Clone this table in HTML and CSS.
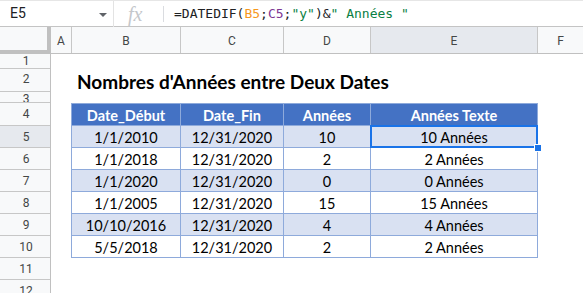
FILE: index.html
```html
<!DOCTYPE html>
<html lang="fr">
<head>
<meta charset="utf-8">
<title>Nombres d'Années entre Deux Dates</title>
<link rel="stylesheet" href="styles.css">
</head>
<body>
<div class="app">
  <div class="formula-bar">
    <div class="name-box">E5</div>
    <div class="caret"></div>
    <div class="fx-sep"></div>
    <div class="fx">fx</div>
    <div class="fx-sep2"></div>
    <div class="formula"><span>=DATEDIF(</span><span class="ref-b">B5</span><span>;</span><span class="ref-c">C5</span><span>;</span><span class="str">"y"</span><span>)&amp;</span><span class="str">" Années "</span></div>
  </div>
  <div class="col-headers">
    <div class="corner"></div>
    <div class="ch col-a">A</div>
    <div class="ch col-b">B</div>
    <div class="ch col-c">C</div>
    <div class="ch col-d">D</div>
    <div class="ch col-e active">E</div>
    <div class="ch col-f">F</div>
  </div>
  <div class="body">
    <div class="row-headers">
      <div class="rh r1">1</div>
      <div class="rh r2">2</div>
      <div class="rh r3">3</div>
      <div class="rh r4">4</div>
      <div class="rh">5</div>
      <div class="rh">6</div>
      <div class="rh">7</div>
      <div class="rh">8</div>
      <div class="rh">9</div>
      <div class="rh">10</div>
      <div class="rh">11</div>
      <div class="rh">12</div>
    </div>
    <div class="cells">
      <div class="spacer-1"></div>
      <div class="title">Nombres d'Années entre Deux Dates</div>
      <div class="spacer-3"></div>
      <div class="table">
        <div class="tr head">
          <div class="td col-b">Date_Début</div>
          <div class="td col-c">Date_Fin</div>
          <div class="td col-d">Années</div>
          <div class="td col-e">Années Texte</div>
        </div>
        <div class="tr band">
          <div class="td col-b">1/1/2010</div>
          <div class="td col-c">12/31/2020</div>
          <div class="td col-d">10</div>
          <div class="td col-e selected">10 Années<span class="handle"></span></div>
        </div>
        <div class="tr">
          <div class="td col-b">1/1/2018</div>
          <div class="td col-c">12/31/2020</div>
          <div class="td col-d">2</div>
          <div class="td col-e">2 Années</div>
        </div>
        <div class="tr band">
          <div class="td col-b">1/1/2020</div>
          <div class="td col-c">12/31/2020</div>
          <div class="td col-d">0</div>
          <div class="td col-e">0 Années</div>
        </div>
        <div class="tr">
          <div class="td col-b">1/1/2005</div>
          <div class="td col-c">12/31/2020</div>
          <div class="td col-d">15</div>
          <div class="td col-e">15 Années</div>
        </div>
        <div class="tr band">
          <div class="td col-b">10/10/2016</div>
          <div class="td col-c">12/31/2020</div>
          <div class="td col-d">4</div>
          <div class="td col-e">4 Années</div>
        </div>
        <div class="tr">
          <div class="td col-b">5/5/2018</div>
          <div class="td col-c">12/31/2020</div>
          <div class="td col-d">2</div>
          <div class="td col-e">2 Années</div>
        </div>
      </div>
    </div>
  </div>
</div>
</body>
</html>
```
FILE: styles.css
```css
* { box-sizing: border-box; }
html, body { margin: 0; padding: 0; background: #ffffff; }
body { width: 583px; height: 293px; overflow: hidden; font-family: Roboto, "Liberation Sans", sans-serif; }
.app { display: flex; flex-direction: column; width: 583px; }

.formula-bar {
  height: 27px;
  display: flex;
  align-items: center;
  border-top: 1px solid #e6e6e6;
  border-bottom: 1px solid #c4c4c4;
  background: #ffffff;
  position: relative;
}
.name-box {
  width: 96px;
  padding-left: 10px;
  font-size: 14px;
  color: #202124;
  line-height: 25px;
}
.caret {
  width: 0; height: 0;
  border-left: 4px solid transparent;
  border-right: 4px solid transparent;
  border-top: 4px solid #5f6368;
  margin-left: 3px;
  margin-top: 2px;
}
.fx-sep {
  width: 1px;
  height: 26px;
  background: #e3e3e3;
  margin-left: 6px;
}
.fx {
  width: 49px;
  padding-left: 14px;
  font-family: "Liberation Serif", "DejaVu Serif", serif;
  font-style: italic;
  font-size: 20px;
  color: #c4c7cb;
  line-height: 24px;
}
.fx-sep2 {
  width: 1px;
  height: 16px;
  background: #dadce0;
}
.formula {
  padding-left: 10px;
  font-family: "DejaVu Sans Mono", "Liberation Mono", monospace;
  font-size: 13px;
  color: #202124;
  white-space: pre;
  line-height: 25px;
}
.ref-b { color: #f7981d; }
.ref-c { color: #7e3794; }
.str { color: #0b8043; }

.col-headers {
  display: flex;
  height: 27px;
  background: #f8f9fa;
  border-bottom: 1px solid #c0c0c0;
}
.corner {
  width: 51px;
  background: #f8f9fa;
  border-right: 4px solid #c0c0c0;
  border-bottom: 4px solid #c0c0c0;
  height: 27px;
}
.ch {
  display: flex;
  align-items: center;
  justify-content: center;
  font-size: 12px;
  color: #444746;
  border-right: 1px solid #c7c7c7;
  padding-top: 1px;
}
.ch.active { background: #e6e9ee; color: #444746; }
.col-a { width: 21px; }
.col-b { width: 109px; }
.col-c { width: 103px; }
.col-d { width: 87px; }
.col-e { width: 167px; }
.col-f { flex: 1; border-right: none; }

.body { display: flex; }
.row-headers {
  width: 51px;
  flex: none;
  display: flex;
  flex-direction: column;
  background: #f8f9fa;
  border-right: 1px solid #c0c0c0;
}
.rh {
  height: 22px;
  flex: none;
  display: flex;
  align-items: center;
  justify-content: center;
  font-size: 12px;
  color: #444746;
  border-bottom: 1px solid #c7c7c7;
  overflow: hidden;
  padding-left: 2px;
}
.rh.r1 { height: 15px; }
.rh.r2 { height: 23px; padding-bottom: 3px; }
.rh.r3 { height: 11px; align-items: flex-start; line-height: 15px; }
.rh.r4 { height: 23px; }
.rh:nth-child(5) { background: #e6e9ee; }

.cells {
  flex: 1;
  display: flex;
  flex-direction: column;
  font-family: Lato, "Open Sans", sans-serif;
  color: #000000;
}
.spacer-1 { height: 15px; }
.title {
  height: 23px;
  padding-left: 26px;
  font-weight: 700;
  font-size: 19px;
  line-height: 25px;
  white-space: nowrap;
}
.spacer-3 { height: 11px; }

.table {
  margin-left: 20px;
  display: flex;
  flex-direction: column;
  border-left: 1px solid #8eaadb;
  border-top: 1px solid #8eaadb;
  align-self: flex-start;
}
.tr { display: flex; height: 22px; }
.tr.head { background: #4472c4; }
.tr.band { background: #d9e1f2; }
.td {
  display: flex;
  align-items: center;
  justify-content: center;
  border-right: 1px solid #8eaadb;
  border-bottom: 1px solid #8eaadb;
  font-size: 14.5px;
  padding-top: 1px;
  position: relative;
}
.tr.head .td { color: #ffffff; font-weight: 700; }
.td.selected::before {
  content: "";
  position: absolute;
  left: -1px; right: -1px; top: -1px; bottom: -1px;
  border: 2px solid #1a73e8;
}
.handle {
  position: absolute;
  right: -5px;
  bottom: -5px;
  width: 8px;
  height: 8px;
  background: #1a73e8;
  border: 1px solid #ffffff;
  z-index: 2;
}
```
